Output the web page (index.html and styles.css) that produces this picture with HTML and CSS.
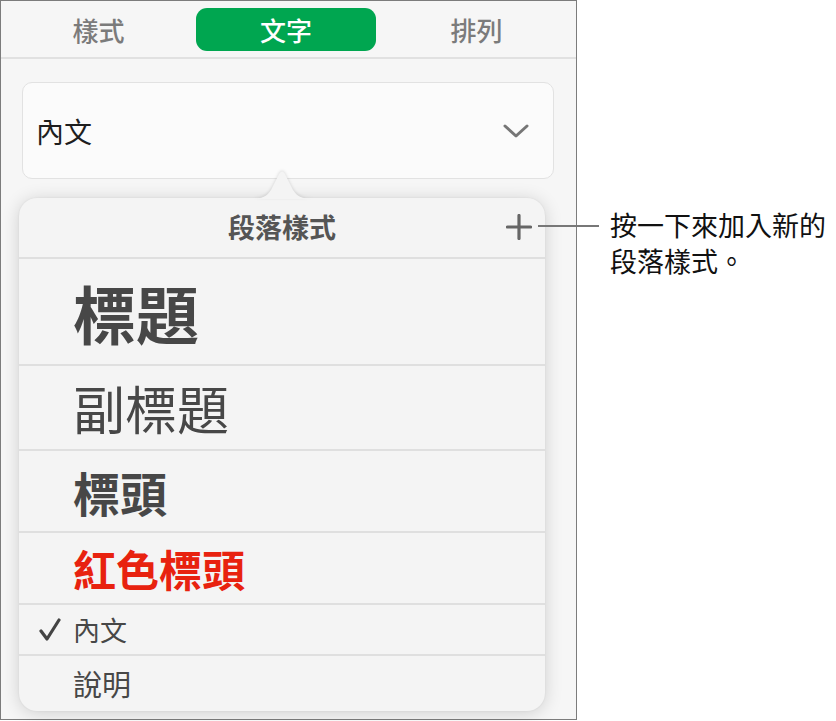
FILE: index.html
```html
<!DOCTYPE html>
<html lang="zh-Hant">
<head>
<meta charset="utf-8">
<title>段落樣式</title>
<link rel="stylesheet" href="styles.css">
</head>
<body>
<div class="panel">
  <div class="tabs">
    <div class="tab">樣式</div>
    <div class="tab tab-active">文字</div>
    <div class="tab">排列</div>
  </div>
  <div class="select">
    <span class="select-label">內文</span>
    <svg class="chevron" width="26" height="14" viewBox="0 0 26 14"><path d="M2 2 L13 12 L24 2" fill="none" stroke="#767676" stroke-width="3" stroke-linecap="round" stroke-linejoin="round"/></svg>
  </div>
  <div class="popover">
    <svg class="arrow" width="64" height="30" viewBox="0 0 64 30"><path d="M0 30 C 13 30 17 27 21 21 L 29 5 Q 32 0 35 5 L 43 21 C 47 27 51 30 64 30 Z" fill="#f4f4f4"/></svg>
    <div class="pop-header">
      <span class="pop-title">段落樣式</span>
      <svg class="plus" width="26" height="26" viewBox="0 0 26 26"><path d="M13 1.5 V24.5 M1.5 13 H24.5" stroke="#666" stroke-width="3.2" stroke-linecap="round"/></svg>
    </div>
    <div class="row row-title"><span class="t-title">標題</span></div>
    <div class="row row-subtitle"><span class="t-subtitle">副標題</span></div>
    <div class="row row-heading"><span class="t-heading">標頭</span></div>
    <div class="row row-red"><span class="t-red">紅色標頭</span></div>
    <div class="row row-body">
      <svg class="check" width="22" height="24" viewBox="0 0 22 24"><path d="M2 13 L8 21 L20 2" fill="none" stroke="#444" stroke-width="3.2" stroke-linecap="round" stroke-linejoin="round"/></svg>
      <span class="t-body">內文</span>
    </div>
    <div class="row row-caption"><span class="t-caption">說明</span></div>
  </div>
</div>
<div class="callout">
  <div class="callout-line"></div>
  <div class="callout-text">按一下來加入新的<br>段落樣式。</div>
</div>
</body>
</html>
```
FILE: styles.css
```css
html, body {
  margin: 0;
  padding: 0;
  background: #ffffff;
}
body {
  position: relative;
  width: 836px;
  height: 721px;
  overflow: hidden;
  font-family: "Noto Sans CJK TC", "Noto Sans CJK SC", "Noto Sans", sans-serif;
}
.panel {
  box-sizing: border-box;
  width: 577px;
  height: 720px;
  border: 1px solid #7c7c7c;
  background: #f6f6f6;
  display: flex;
  flex-direction: column;
}
.tabs {
  display: grid;
  grid-template-columns: 195px 180px 195px;
  height: 58px;
  padding-top: 7px;
  box-sizing: border-box;
  border-bottom: 2px solid #e1e1e1;
}
.tab {
  height: 43px;
  display: flex;
  align-items: center;
  justify-content: center;
  font-size: 26px;
  font-weight: 500;
  color: #7b7b7b;
  line-height: 1;
}
.tab-active {
  background: #00a650;
  color: #ffffff;
  border-radius: 11px;
}
.tab:last-child {
  padding-left: 6px;
}
.select {
  box-sizing: border-box;
  margin: 23px 0 0 21px;
  width: 532px;
  height: 97px;
  border: 1px solid #e2e2e2;
  border-radius: 10px;
  background: #fbfbfb;
  display: flex;
  align-items: center;
  justify-content: space-between;
  padding: 0 24px 0 13px;
}
.select-label {
  font-size: 28px;
  color: #1e1e1e;
  line-height: 1;
}
.popover {
  position: relative;
  box-sizing: border-box;
  margin: 19px 0 0 18px;
  width: 526px;
  height: 513px;
  background: #f4f4f4;
  border-radius: 18px;
  box-shadow: 0 2px 18px rgba(0, 0, 0, 0.16), 0 0 2px rgba(0, 0, 0, 0.08);
}
.arrow {
  position: absolute;
  left: 231px;
  top: -29px;
  filter: drop-shadow(0 -1px 1.5px rgba(0, 0, 0, 0.12));
}
.pop-header {
  position: relative;
  box-sizing: border-box;
  height: 61px;
  border-bottom: 2px solid #dfdfdf;
  display: grid;
  grid-template-columns: 1fr auto 1fr;
  align-items: center;
  padding: 0 13px 2px 0;
}
.pop-title {
  grid-column: 2;
  font-size: 27px;
  font-weight: 700;
  color: #555555;
  line-height: 1;
  padding-left: 13px;
}
.plus {
  grid-column: 3;
  justify-self: end;
}
.row {
  box-sizing: border-box;
  border-bottom: 2px solid #dfdfdf;
  display: flex;
  align-items: center;
  padding-left: 54px;
  color: #474747;
  line-height: 1;
}
.row-title { height: 107px; }
.row-subtitle { height: 85px; }
.row-heading { height: 82px; }
.row-red { height: 72px; }
.row-body { height: 51px; padding-left: 20px; }
.row-caption { height: 55px; border-bottom: none; }
.t-title {
  font-size: 63px;
  font-weight: 700;
}
.t-subtitle {
  font-size: 52px;
  font-weight: 400;
}
.t-heading {
  font-size: 47px;
  font-weight: 700;
}
.t-red {
  font-size: 43px;
  font-weight: 700;
  color: #e8220f;
}
.check {
  margin-right: 12px;
}
.t-body {
  font-size: 27px;
  font-weight: 400;
}
.t-caption {
  font-size: 29px;
  font-weight: 400;
}
.callout {
  position: absolute;
  left: 538px;
  top: 207px;
  display: flex;
  align-items: flex-start;
}
.callout-line {
  width: 61px;
  height: 2px;
  margin-top: 18px;
  background: #777777;
}
.callout-text {
  margin-left: 11px;
  font-size: 27px;
  line-height: 35.5px;
  color: #111111;
}
```
